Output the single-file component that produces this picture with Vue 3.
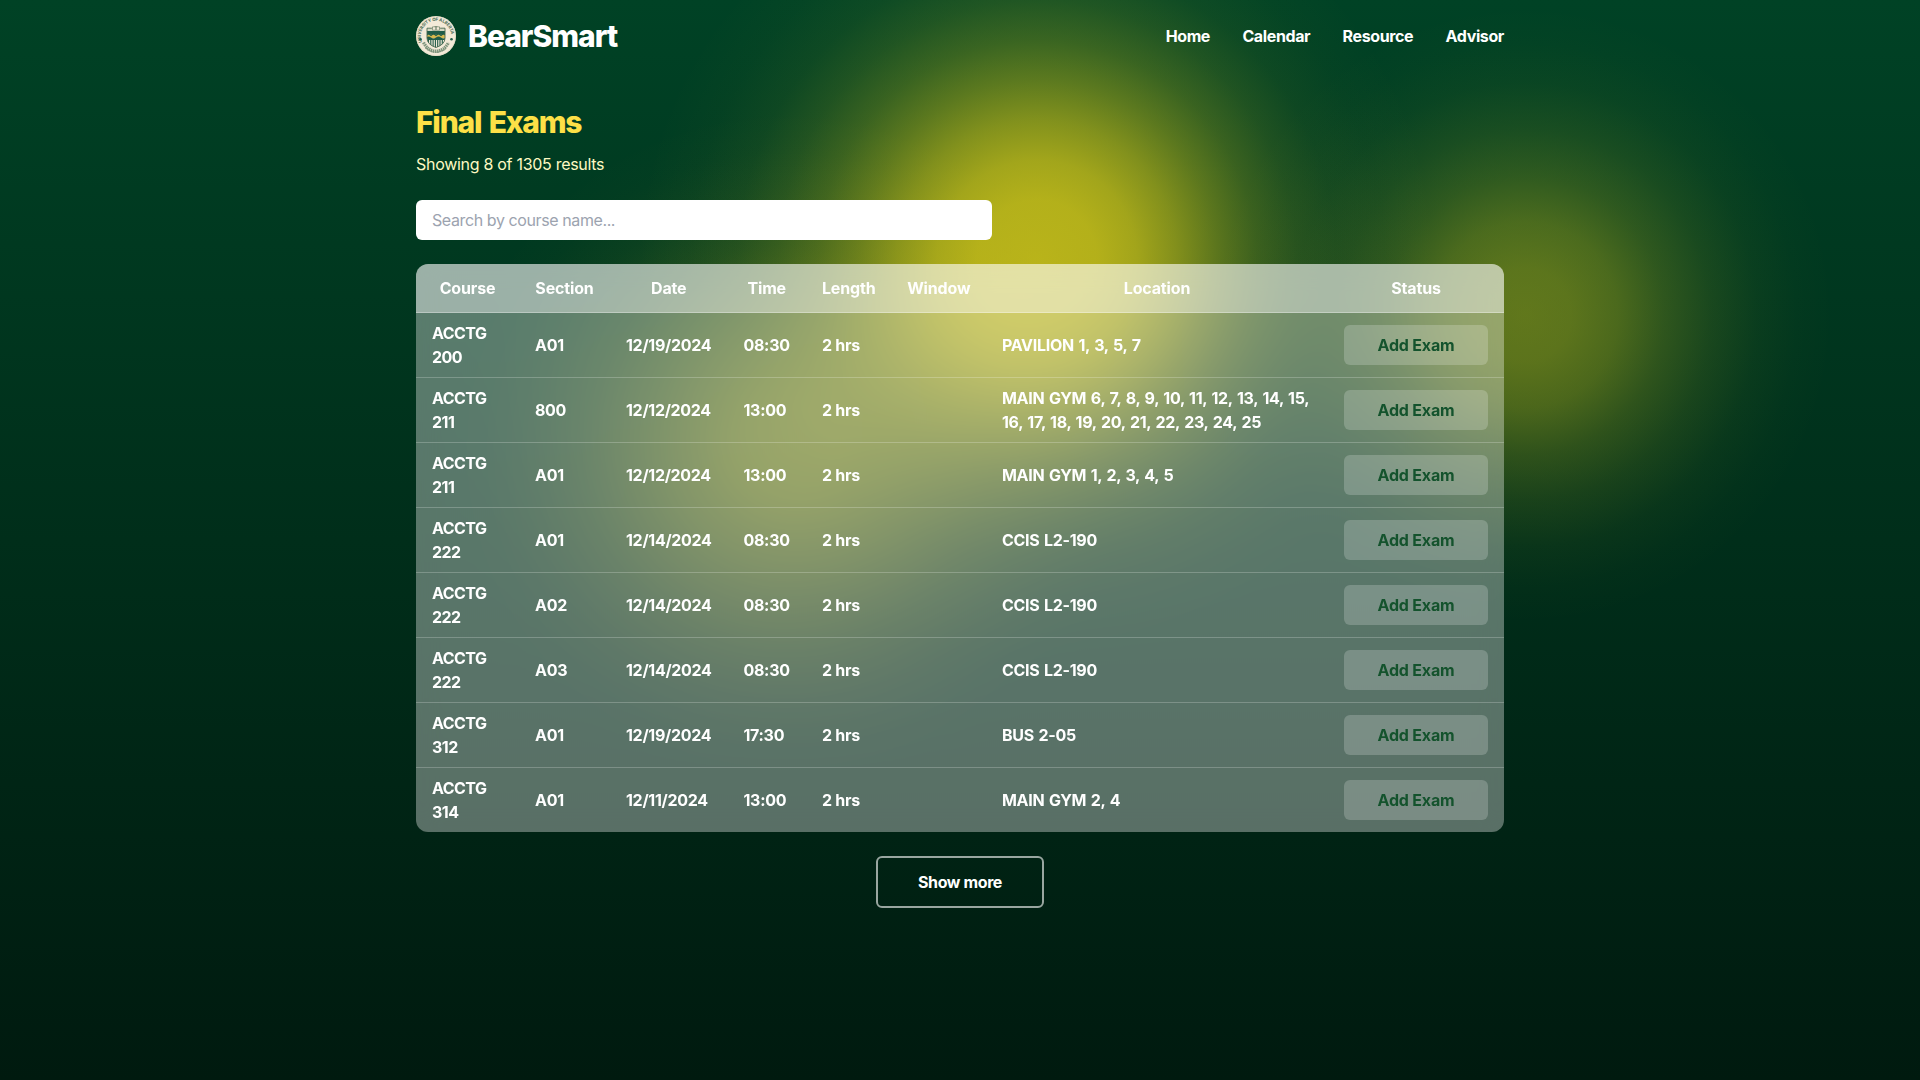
<script setup>
const links = ['Home', 'Calendar', 'Resource', 'Advisor']

const columns = [
  { label: 'Course', width: 103 },
  { label: 'Section', width: 91 },
  { label: 'Date', width: 117.5 },
  { label: 'Time', width: 78.5 },
  { label: 'Length', width: 85.5 },
  { label: 'Window', width: 94.5 },
  { label: 'Location', width: 342 },
  { label: 'Status', width: 176 },
]

const exams = [
  ['ACCTG 200', 'A01', '12/19/2024', '08:30', '2 hrs', '', 'PAVILION 1, 3, 5, 7'],
  ['ACCTG 211', '800', '12/12/2024', '13:00', '2 hrs', '', 'MAIN GYM 6, 7, 8, 9, 10, 11, 12, 13, 14, 15, 16, 17, 18, 19, 20, 21, 22, 23, 24, 25'],
  ['ACCTG 211', 'A01', '12/12/2024', '13:00', '2 hrs', '', 'MAIN GYM 1, 2, 3, 4, 5'],
  ['ACCTG 222', 'A01', '12/14/2024', '08:30', '2 hrs', '', 'CCIS L2-190'],
  ['ACCTG 222', 'A02', '12/14/2024', '08:30', '2 hrs', '', 'CCIS L2-190'],
  ['ACCTG 222', 'A03', '12/14/2024', '08:30', '2 hrs', '', 'CCIS L2-190'],
  ['ACCTG 312', 'A01', '12/19/2024', '17:30', '2 hrs', '', 'BUS 2-05'],
  ['ACCTG 314', 'A01', '12/11/2024', '13:00', '2 hrs', '', 'MAIN GYM 2, 4'],
]
</script>

<template>
  <div class="page">
    <div class="container">
      <header class="header">
        <a class="brand">
          <svg class="logo" viewBox="0 0 40 40">
            <defs>
              <path id="ring" d="M6.1 26.200 A15.200 15.200 0 1 1 33.900 26.200" />
              <clipPath id="shield">
                <path d="M11 12.200 Q15.500 13 20 10.600 Q24.500 13 29 12.200 V22 Q29 28.500 20 31.500 Q11 28.500 11 22 Z" />
              </clipPath>
            </defs>
            <circle cx="20" cy="20" r="20" fill="#f3ead8" />
            <circle cx="20" cy="20" r="19.500" fill="none" stroke="#d9d4bd" stroke-width=".5" />
            <text class="seal"><textPath href="#ring" textLength="52">UNIVERSITY OF ALBERTA</textPath></text>
            <g clip-path="url(#shield)">
              <rect x="10" y="8" width="20" height="25" fill="#f3ead8" />
              <rect x="10" y="8" width="20" height="7" fill="#d5d7c2" />
              <rect x="10" y="15" width="20" height="4.500" fill="#1f5b48" />
              <rect x="10" y="18.500" width="20" height="4" fill="#d8b84e" />
              <path d="M10 19.500 L12.500 17.500 L15 19.500 L17.500 17.500 L20 19.500 L22.500 17.500 L25 19.500 L27.500 17.500 L30 19.500" fill="none" stroke="#1f5b48" stroke-width="1.200" />
              <path d="M10 21.500 q2.500 -1.800 5 0 t5 0 t5 0 t5 0 V24 H10z" fill="#1f5b48" />
              <path d="M12.500 24v6M14.800 24v8M17.100 24v8M19.400 24v8M21.700 24v8M24 24v8M26.300 24v7" stroke="#1f5b48" stroke-width="1.100" />
            </g>
            <path d="M11 12.200 Q15.500 13 20 10.600 Q24.500 13 29 12.200 V22 Q29 28.500 20 31.500 Q11 28.500 11 22 Z" fill="none" stroke="#47694f" stroke-width=".9" />
            <path d="M16.500 10.800h3.200v3.400h-3.200zM20.300 10.800h3.200v3.400h-3.200z" fill="#f3ead8" stroke="#667a62" stroke-width=".6" />
            <circle cx="4.500" cy="23.200" r="1.300" fill="#1f5b48" />
            <circle cx="35.500" cy="23.200" r="1.300" fill="#1f5b48" />
            <g fill="none" stroke="#7d947c">
              <path d="M7.500 26.500 Q12 34.800 20 35.200 Q28 34.800 32.500 26.500" stroke-width="3.200" stroke-dasharray="1.500 .6" />
              <path d="M9.500 32 Q20 40.500 30.500 32" stroke-width="1.400" stroke-dasharray="1.600 .5" />
            </g>
          </svg>
          <span class="brand-name">BearSmart</span>
        </a>
        <nav class="nav">
          <a v-for="link in links" :key="link">{{ link }}</a>
        </nav>
      </header>

      <main>
        <h1>Final Exams</h1>
        <p class="summary">Showing 8 of 1305 results</p>
        <input class="search" type="text" placeholder="Search by course name..." />

        <div class="card">
          <table>
            <colgroup>
              <col v-for="c in columns" :key="c.label" :style="{ width: c.width + 'px' }" />
            </colgroup>
            <thead>
              <tr>
                <th v-for="c in columns" :key="c.label">{{ c.label }}</th>
              </tr>
            </thead>
            <tbody>
              <tr v-for="(exam, i) in exams" :key="i">
                <td v-for="(value, j) in exam" :key="j" :class="{ code: j === 0, place: j === 6 }">{{ value }}</td>
                <td class="status"><button class="add">Add Exam</button></td>
              </tr>
            </tbody>
          </table>
        </div>

        <div class="more-row">
          <button class="more">Show more</button>
        </div>
      </main>
    </div>
  </div>
</template>

<style>
body {
  margin: 0;
  background: #001b10;
}
</style>

<style scoped>
* {
  box-sizing: border-box;
}

.page {
  --glow: 249, 222, 24;
  min-height: 100vh;
  font: 400 16px/24px Inter, 'Liberation Sans', sans-serif;
  color: #fff;
  background:
    radial-gradient(circle 400px at 1037px 260px,
      rgba(var(--glow), 0.74) 0,
      rgba(var(--glow), 0.72) 15%,
      rgba(var(--glow), 0.65) 25%,
      rgba(var(--glow), 0.52) 35%,
      rgba(var(--glow), 0.37) 45%,
      rgba(var(--glow), 0.23) 55%,
      rgba(var(--glow), 0.13) 65%,
      rgba(var(--glow), 0.06) 75%,
      rgba(var(--glow), 0.02) 87%,
      rgba(var(--glow), 0) 100%),
    radial-gradient(circle 310px at 1525px 315px,
      rgba(var(--glow), 0.39) 0,
      rgba(var(--glow), 0.37) 15%,
      rgba(var(--glow), 0.3) 30%,
      rgba(var(--glow), 0.19) 45%,
      rgba(var(--glow), 0.1) 60%,
      rgba(var(--glow), 0.04) 75%,
      rgba(var(--glow), 0.012) 88%,
      rgba(var(--glow), 0) 100%),
    radial-gradient(circle 340px at 785px 450px,
      rgba(var(--glow), 0.38) 0,
      rgba(var(--glow), 0.355) 15%,
      rgba(var(--glow), 0.28) 30%,
      rgba(var(--glow), 0.19) 45%,
      rgba(var(--glow), 0.1) 60%,
      rgba(var(--glow), 0.045) 75%,
      rgba(var(--glow), 0.012) 88%,
      rgba(var(--glow), 0) 100%),
    linear-gradient(#004225, #001a0f);
}

.container {
  width: 1088px;
  margin: 0 auto;
}

.header {
  display: flex;
  align-items: center;
  justify-content: space-between;
  height: 72px;
}

.brand {
  display: flex;
  align-items: center;
  gap: 12px;
}

.logo {
  width: 40px;
  height: 40px;
}

.seal {
  font: 700 4.4px Inter, sans-serif;
  fill: #4c6c55;
}

.brand-name {
  font-size: 30px;
  line-height: 36px;
  font-weight: 800;
  letter-spacing: -1.02px;
}

.nav {
  display: flex;
  gap: 32.4px;
  font-weight: 700;
  letter-spacing: -0.38px;
}

h1 {
  margin: 32px 0 0;
  font-size: 30px;
  line-height: 36px;
  font-weight: 800;
  letter-spacing: -1.2px;
  word-spacing: 2px;
  color: #fde047;
}

.summary {
  margin: 12px 0 0;
  letter-spacing: -0.29px;
  color: #fef9c3;
}

.search {
  display: block;
  width: 576px;
  height: 40px;
  margin: 24px 0 0;
  padding: 8px 16px;
  border: 0;
  border-radius: 6px;
  font: inherit;
  letter-spacing: -0.4px;
  background: #fff;
}

.search::placeholder {
  color: #9ca3af;
  opacity: 1;
}

.card {
  margin-top: 24px;
  border-radius: 12px;
  overflow: hidden;
  background: rgba(255, 255, 255, 0.35);
  backdrop-filter: blur(12px);
}

table {
  width: 1088px;
  table-layout: fixed;
  border-spacing: 0;
  font-weight: 700;
  letter-spacing: -0.3px;
}

th {
  height: 49px;
  padding: 12px 0;
  letter-spacing: -0.16px;
  background: rgba(255, 255, 255, 0.4);
  border-bottom: 1px solid rgba(255, 255, 255, 0.3);
}

td {
  height: 65px;
  padding: 8px 16px;
  white-space: nowrap;
  border-bottom: 1px solid rgba(255, 255, 255, 0.22);
}

.code,
.place {
  white-space: normal;
}

.code {
  letter-spacing: -0.55px;
}

.place {
  letter-spacing: -0.3px;
  word-spacing: 1.1px;
}

tbody tr:last-child td {
  height: 64px;
  border-bottom: 0;
}

button {
  font: inherit;
  letter-spacing: inherit;
}

.add {
  display: block;
  width: 144px;
  height: 40px;
  padding: 0;
  border: 0;
  border-radius: 6px;
  color: #14532d;
  letter-spacing: -0.2px;
  background: rgba(255, 255, 255, 0.2);
}

.more-row {
  display: flex;
  justify-content: center;
  margin-top: 24px;
}

.more {
  width: 168px;
  height: 52px;
  padding: 0;
  border: 2px solid rgba(255, 255, 255, 0.6);
  border-radius: 6px;
  color: #fff;
  background: transparent;
  font-weight: 700;
  letter-spacing: -0.38px;
}
</style>
